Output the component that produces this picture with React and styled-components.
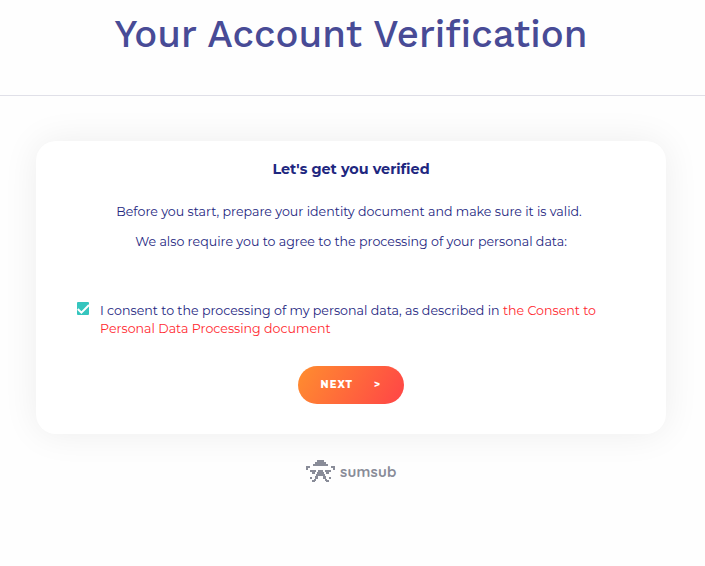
import React, { useState } from 'react';
import styled, { createGlobalStyle } from 'styled-components';

const GlobalStyle = createGlobalStyle`
  * {
    box-sizing: border-box;
  }
  body {
    margin: 0;
    background: #fefefe;
    color: #1e277f;
    font-family: Montserrat, Inter, sans-serif;
  }
`;

const Page = styled.div`
  height: 566px;
  overflow: hidden;
`;
const Header = styled.header`
  display: flex;
  justify-content: center;
  height: 96px;
  padding: 9px 3px 0 0;
  border-bottom: 1px solid #e0e0e8;
`;
const PageTitle = styled.h1`
  margin: 0;
  color: #484b96;
  font-family: 'Work Sans', Inter, sans-serif;
  font-size: 38.4px;
  font-weight: 500;
  line-height: 50px;
  white-space: nowrap;
`;
const Card = styled.main`
  display: flex;
  flex-direction: column;
  align-items: center;
  width: 630px;
  height: 293px;
  margin: 45px 0 0 36px;
  padding-top: 18px;
  background: #ffffff;
  border-radius: 20px;
  box-shadow: 0 0 36px rgba(0, 0, 0, 0.07);
`;
const CardTitle = styled.h2`
  margin: 0 0 23px;
  font-size: 14.4px;
  font-weight: 700;
  line-height: 20px;
  white-space: nowrap;
`;
const Line = styled.p`
  margin: 0 ${({ $shift }) => $shift || 0}px 10px 0;
  font-size: 12.62px;
  line-height: 20px;
  white-space: nowrap;
`;
const Consent = styled.label`
  display: flex;
  align-self: flex-start;
  gap: 11px;
  margin: 40px 0 0 41px;
`;
const Checkbox = styled.input`
  position: absolute;
  opacity: 0;
`;
const CheckMark = styled.svg`
  flex: none;
  width: 12px;
  height: 13px;
`;
const ConsentText = styled.span`
  font-size: 12.62px;
  line-height: 18px;
  white-space: nowrap;
`;
const DocumentLink = styled.a`
  color: #ff2a30;
  text-decoration: none;
`;
const NextButton = styled.button`
  display: flex;
  align-items: center;
  gap: 21px;
  width: 106px;
  height: 38px;
  margin-top: 28px;
  padding: 0 0 1px 22.5px;
  border: none;
  border-radius: 19px;
  background: linear-gradient(120deg, #ff8a30 5%, #ff4a45 92%);
  color: #ffffff;
  font-family: Montserrat, Inter, sans-serif;
  font-size: 10px;
  font-weight: 800;
  letter-spacing: 1.1px;
`;
const Footer = styled.footer`
  display: flex;
  align-items: center;
  gap: 5px;
  margin: 26px 0 0 306px;
  color: #898c98;
`;
const Wordmark = styled.span`
  padding-top: 2px;
  font-family: Quicksand, 'Montserrat Alternates', Montserrat, sans-serif;
  font-size: 15px;
  font-weight: 700;
  line-height: 20px;
  letter-spacing: 0.2px;
`;

const Mascot = () => (
  <svg width="29" height="22" viewBox="0 0 29 22" fill="currentColor">
    <path d="M11 0h7v2h2v2h2v2H7V4h2V2h2z" />
    <path d="M0 6h4v2H2v2H0zM25 6h4v4h-2V8h-2z" />
    <path d="M4 10h6v2h-1v2H6v-2H4zM19 10h6v2h-2v2h-3v-2h-1z" />
    <path d="M12 10h5v2h1v2h1v2h1v3h-3v-3h-5v3H9v-3h1v-2h1v-2h1z" />
    <path d="M4 17h2v2H4zM6 20h2v-1h2v2H9v1H6zM23 17h2v2h-2zM19 19h2v1h2v2h-3v-1h-1z" />
  </svg>
);

const App = () => {
  const [agreed, setAgreed] = useState(true);

  return (
    <Page>
      <GlobalStyle />
      <Header>
        <PageTitle>Your Account Verification</PageTitle>
      </Header>
      <Card>
        <CardTitle>Let's get you verified</CardTitle>
        <Line $shift={4}>
          Before you start, prepare your identity document and make sure it is valid.
        </Line>
        <Line>
          We also require you to agree to the processing of your personal data:
        </Line>
        <Consent>
          <Checkbox
            type="checkbox"
            checked={agreed}
            onChange={() => setAgreed(!agreed)}
          />
          <CheckMark viewBox="0 0 12 13">
            <rect width="12" height="13" rx="1" fill="#35c5be" />
            {agreed && (
              <path d="M.8 7l3.6 3.6L12 3" fill="none" stroke="#fff" strokeWidth="2" />
            )}
          </CheckMark>
          <ConsentText>
            I consent to the processing of my personal data, as described in{' '}
            <DocumentLink>the Consent to</DocumentLink>
            <br />
            <DocumentLink>Personal Data Processing document</DocumentLink>
          </ConsentText>
        </Consent>
        <NextButton type="button">
          <span>NEXT</span>
          <span>&gt;</span>
        </NextButton>
      </Card>
      <Footer>
        <Mascot />
        <Wordmark>sumsub</Wordmark>
      </Footer>
    </Page>
  );
};

export default App;
